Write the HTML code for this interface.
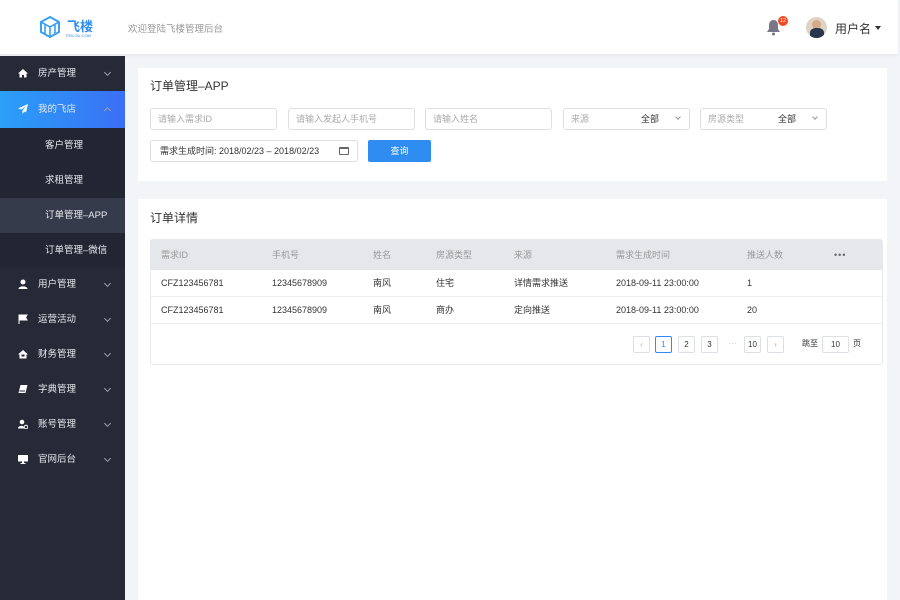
<!DOCTYPE html>
<html><head><meta charset="utf-8"><style>
*{margin:0;padding:0;box-sizing:border-box}
body{width:900px;height:600px;overflow:hidden;background:#f3f4f8;font-family:"Liberation Sans","Noto Sans CJK SC",sans-serif;position:relative;color:#333}
.hdr{position:absolute;left:0;top:0;width:898px;height:55px;background:#fff;border-bottom:1px solid #e6e8ee;box-shadow:0 1px 3px rgba(0,0,0,.04)}
.side{position:absolute;left:0;top:56px;width:125px;height:544px;background:#262a36}
.it{position:absolute;left:0;width:125px;height:35px;color:#e6e8ee;font-size:9.5px;line-height:35px}
.it .ic{position:absolute;left:18px;top:12px;width:10px;height:10px}
.it .tx{position:absolute;left:38px}
.it .ar{position:absolute;left:105px;top:14px;width:5px;height:5px;border-right:1px solid #9aa0ad;border-bottom:1px solid #9aa0ad;transform:rotate(45deg)}
.sub{position:absolute;left:0;width:125px;height:35px;line-height:35px;font-size:9.5px;color:#e6e8ee;padding-left:45px}
.card{position:absolute;left:138px;width:749px;background:#fff}
.ttl{position:absolute;left:12px;font-size:12px;color:#333}
.inp{position:absolute;height:22px;border:1px solid #dcdfe6;border-radius:3px;font-size:9px;color:#aaa;line-height:20px;padding-left:7px;background:#fff}
.sel b{position:absolute;right:30px;font-weight:normal;color:#333}
.sel i{position:absolute;right:9px;top:6px;width:4px;height:4px;border-right:1px solid #999;border-bottom:1px solid #999;transform:rotate(45deg)}
.tbl{position:absolute;left:12px;top:40px;width:733px;height:126px;border:1px solid #e6e8ee;border-radius:3px}
.th{position:absolute;left:0;top:0;width:731px;height:30px;background:#e6e7eb;font-size:9px;color:#999;line-height:30px}
.tr{position:absolute;left:0;width:731px;height:27px;border-bottom:1px solid #ebedf0;font-size:9px;color:#333;line-height:26px}
.th span,.tr span{position:absolute}
.pg{position:absolute;top:96px;width:17px;height:17px;border:1px solid #dcdfe6;border-radius:2px;font-size:8px;line-height:15px;text-align:center;color:#333}
</style></head><body>
<div class="hdr">
 <svg style="position:absolute;left:40px;top:16px" width="20" height="22" viewBox="0 0 20 22"><path d="M10 1L19 6V16L10 21L1 16V6Z" fill="none" stroke="#3aa0f0" stroke-width="2"/><path d="M1 6L10 11L19 6M10 11V21M5 9V18M15 9V18" stroke="#3aa0f0" stroke-width="1.6" fill="none"/></svg>
 <div style="position:absolute;left:67px;top:16px;font-size:13px;color:#2d8cf0;font-weight:bold">飞楼</div>
 <div style="position:absolute;left:66px;top:33px;font-size:4px;color:#2d8cf0">FEILOU.COM</div>
 <div style="position:absolute;left:128px;top:21px;font-size:9.5px;color:#999">欢迎登陆飞楼管理后台</div>
 <svg style="position:absolute;left:766px;top:19px" width="15" height="17" viewBox="0 0 15 17"><path d="M7.5 1C4.5 1 3 3.5 3 6V10L1 13H14L12 10V6C12 3.5 10.5 1 7.5 1Z" fill="#778"/><circle cx="7.5" cy="15" r="1.5" fill="#778"/></svg>
 <div style="position:absolute;left:778px;top:16px;width:10px;height:10px;border-radius:50%;background:#f04b24;color:#fff;font-size:5.5px;line-height:10px;text-align:center">12</div>
 <div style="position:absolute;left:806px;top:17px;width:21px;height:21px;border-radius:50%;overflow:hidden;background:#ddd3c4"><div style="position:absolute;left:6px;top:3px;width:9px;height:9px;border-radius:50%;background:#d9a888"></div><div style="position:absolute;left:4px;top:11px;width:14px;height:12px;border-radius:40% 40% 0 0;background:#2a3550"></div></div>
 <div style="position:absolute;left:835px;top:20px;font-size:12px;color:#333">用户名</div>
 <div style="position:absolute;left:875px;top:26px;width:0;height:0;border-left:3px solid transparent;border-right:3px solid transparent;border-top:4px solid #333"></div>
</div>
<div class="side">
 <div class="it" style="top:0"><svg class="ic" viewBox="0 0 10 10"><path d="M5 1L10 5.5H8.5V9.5H6V7H4V9.5H1.5V5.5H0Z" fill="#fff"/></svg><span class="tx">房产管理</span><i class="ar"></i></div>
 <div class="it" style="top:35px;height:37px;line-height:37px;background:linear-gradient(90deg,#2aa0f8,#3a6ff5)"><svg class="ic" viewBox="0 0 10 10" style="top:13px"><path d="M10 0L0 4.5L3.5 5.5L8 2L4.5 6.5V10L6.5 7.5L8 8.5Z" fill="#fff"/></svg><span class="tx">我的飞店</span><i class="ar" style="top:17px;transform:rotate(-135deg)"></i></div>
 <div style="position:absolute;top:72px;left:0;width:125px;height:140px;background:#222632"></div>
 <div class="sub" style="top:72px">客户管理</div>
 <div class="sub" style="top:107px">求租管理</div>
 <div class="sub" style="top:142px;background:#363b4b">订单管理–APP</div>
 <div class="sub" style="top:177px">订单管理–微信</div>
 <div class="it" style="top:211px"><svg class="ic" viewBox="0 0 10 10"><circle cx="5" cy="3" r="2.5" fill="#fff"/><path d="M0.5 10C0.5 6.5 9.5 6.5 9.5 10Z" fill="#fff"/></svg><span class="tx">用户管理</span><i class="ar"></i></div>
 <div class="it" style="top:246px"><svg class="ic" viewBox="0 0 10 10"><path d="M1 0.5V10M1 1H9L7.5 3.5L9 6H1" fill="#fff" stroke="#fff"/></svg><span class="tx">运营活动</span><i class="ar"></i></div>
 <div class="it" style="top:281px"><svg class="ic" viewBox="0 0 10 10"><path d="M5 1L10 5.5H8.5V9.5H1.5V5.5H0Z" fill="#fff"/><rect x="3.5" y="5.5" width="3" height="2" fill="#262a36"/></svg><span class="tx">财务管理</span><i class="ar"></i></div>
 <div class="it" style="top:316px"><svg class="ic" viewBox="0 0 10 10"><path d="M2.5 1H9.5L7.5 9H0.5Z" fill="#fff"/><path d="M1.5 7H7" stroke="#262a36"/></svg><span class="tx">字典管理</span><i class="ar"></i></div>
 <div class="it" style="top:351px"><svg class="ic" viewBox="0 0 10 10"><circle cx="4" cy="3" r="2.3" fill="#fff"/><path d="M0 9.5C0 6 7 6 6 9.5Z" fill="#fff"/><circle cx="8" cy="8" r="1.8" fill="none" stroke="#fff"/></svg><span class="tx">账号管理</span><i class="ar"></i></div>
 <div class="it" style="top:386px"><svg class="ic" viewBox="0 0 10 10"><rect x="0" y="1" width="10" height="6.5" fill="#fff"/><rect x="4" y="7.5" width="2" height="1.5" fill="#fff"/><rect x="2.5" y="9" width="5" height="1" fill="#fff"/></svg><span class="tx">官网后台</span><i class="ar"></i></div>
</div>
<div class="card" style="top:68px;height:113px">
 <div class="ttl" style="top:9px">订单管理–APP</div>
 <div class="inp" style="left:12px;top:40px;width:127px">请输入需求ID</div>
 <div class="inp" style="left:150px;top:40px;width:127px">请输入发起人手机号</div>
 <div class="inp" style="left:287px;top:40px;width:127px">请输入姓名</div>
 <div class="inp sel" style="left:425px;top:40px;width:127px">来源<b>全部</b><i></i></div>
 <div class="inp sel" style="left:562px;top:40px;width:127px">房源类型<b>全部</b><i></i></div>
 <div class="inp" style="left:12px;top:72px;width:208px;color:#333;padding-left:9px">需求生成时间: 2018/02/23 – 2018/02/23<span style="position:absolute;left:188px;top:6px;width:10px;height:8px;border:1px solid #666;border-top-width:2px;border-radius:1px"></span></div>
 <div style="position:absolute;left:230px;top:72px;width:63px;height:22px;background:#2f8cf0;border-radius:2px;color:#fff;font-size:9px;line-height:22px;text-align:center">查询</div>
</div>
<div class="card" style="top:199px;height:401px">
 <div class="ttl" style="top:10px">订单详情</div>
 <div class="tbl">
  <div class="th"><span style="left:10px">需求ID</span><span style="left:121px">手机号</span><span style="left:222px">姓名</span><span style="left:285px">房源类型</span><span style="left:363px">来源</span><span style="left:465px">需求生成时间</span><span style="left:596px">推送人数</span><span style="left:683px;color:#666;letter-spacing:1px">•••</span></div>
  <div class="tr" style="top:30px"><span style="left:10px">CFZ123456781</span><span style="left:121px">12345678909</span><span style="left:222px">南风</span><span style="left:285px">住宅</span><span style="left:363px">详情需求推送</span><span style="left:465px">2018-09-11 23:00:00</span><span style="left:596px">1</span></div>
  <div class="tr" style="top:57px"><span style="left:10px">CFZ123456781</span><span style="left:121px">12345678909</span><span style="left:222px">南风</span><span style="left:285px">商办</span><span style="left:363px">定向推送</span><span style="left:465px">2018-09-11 23:00:00</span><span style="left:596px">20</span></div>
  <div class="pg" style="left:482px;color:#aaa">‹</div>
  <div class="pg" style="left:504px;border-color:#2f8cf0;color:#2f8cf0">1</div>
  <div class="pg" style="left:527px">2</div>
  <div class="pg" style="left:550px">3</div>
  <div class="pg" style="left:573px;border:none;color:#bbb">···</div>
  <div class="pg" style="left:593px">10</div>
  <div class="pg" style="left:616px;color:#aaa">›</div>
  <div style="position:absolute;left:651px;top:98px;font-size:8px">跳至</div>
  <div class="pg" style="left:671px;width:27px">10</div>
  <div style="position:absolute;left:702px;top:98px;font-size:8px">页</div>
 </div>
</div>
</body></html>
